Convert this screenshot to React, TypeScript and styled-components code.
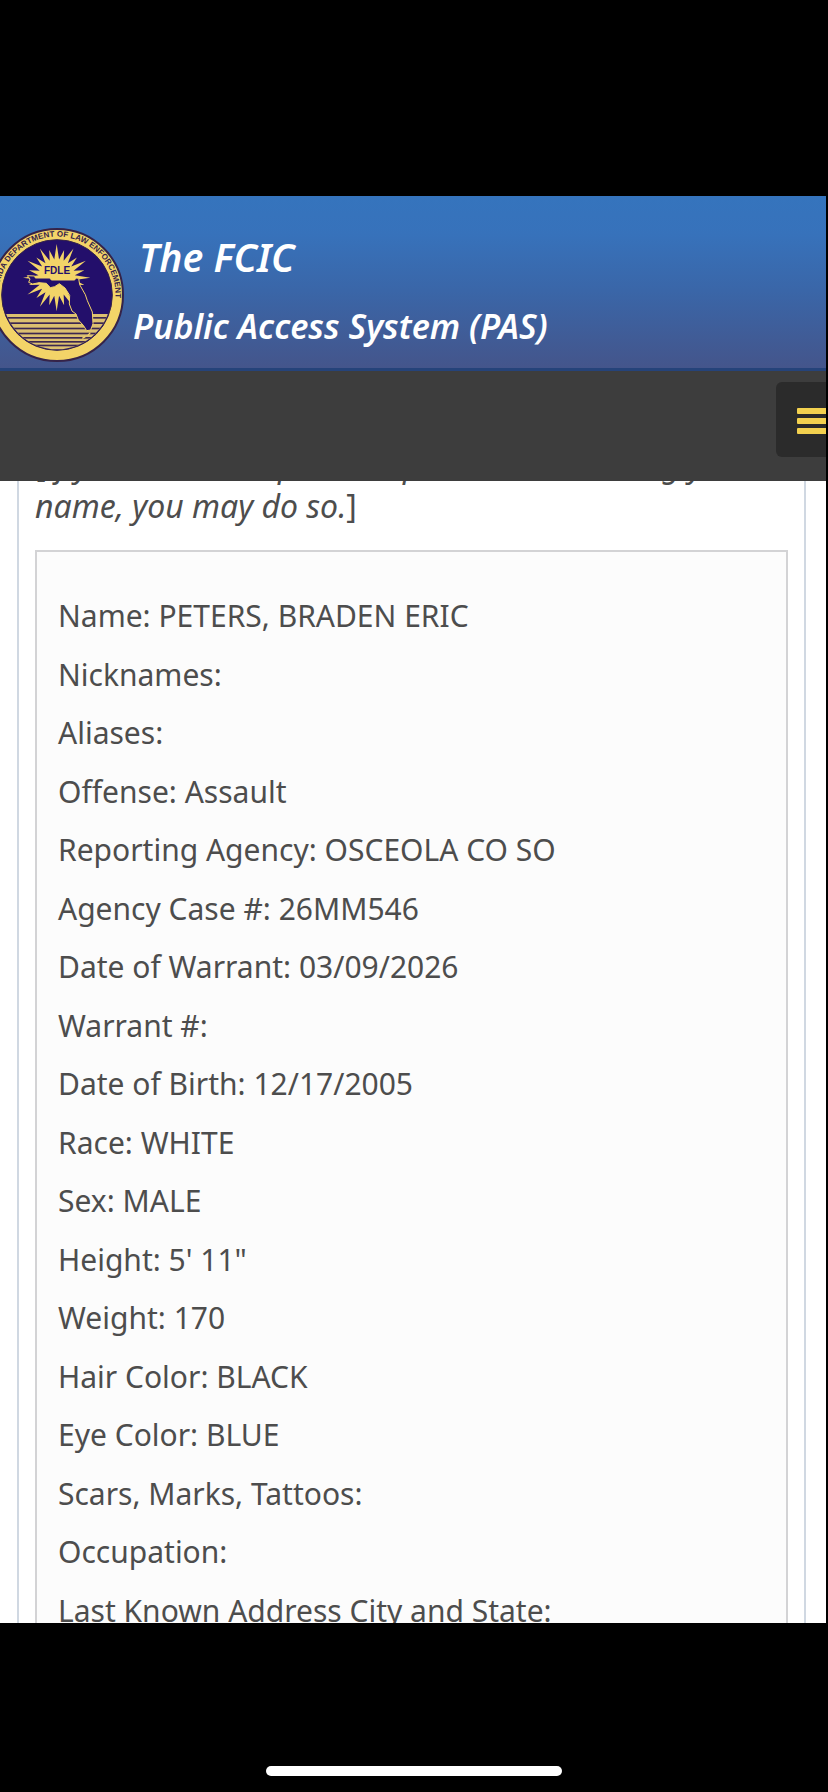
import React from "react";
import styled, { createGlobalStyle } from "styled-components";

const GlobalStyle = createGlobalStyle`
  *, *::before, *::after { box-sizing: border-box; }
  body {
    margin: 0;
    background: #000;
    color: #4d4d4d;
    font-family: "Noto Sans", "Open Sans", sans-serif;
  }
`;

const Screen = styled.div`
  display: flex;
  flex-direction: column;
  height: 100vh;
  padding-top: 196px;
  overflow: hidden;
`;

const Site = styled.div`
  flex: 1 1 0;
  min-height: 0;
  display: flex;
  flex-direction: column;
  margin-right: 2px;
  overflow: hidden;
  background: #fff;
`;

const Banner = styled.header`
  flex: none;
  display: flex;
  align-items: flex-end;
  gap: 9px;
  height: 175px;
  padding-bottom: 6px;
  background: linear-gradient(#3574bd 0%, #3772bb 22%, #3a66a8 55%, #44558b 100%);
  border-bottom: 3px solid #25437a;
`;

const Seal = styled.svg`
  flex: none;
  width: 134px;
  height: 134px;
  margin-left: -10px;
`;

const Titles = styled.div`
  padding-bottom: 1px;
  color: #fff;
  font-style: italic;
  font-weight: 600;
  line-height: 70px;
  white-space: nowrap;
`;

const SiteTitle = styled.h1`
  margin: 0;
  padding-left: 6px;
  font: inherit;
  font-size: 39px;
  line-height: 68px;
`;

const SiteSubtitle = styled.p`
  margin: 0;
  font-size: 34px;
`;

const MenuBar = styled.nav`
  flex: none;
  display: flex;
  justify-content: flex-end;
  height: 110px;
  padding-top: 11px;
  overflow: hidden;
  background: #3d3d3d;
`;

const MenuButton = styled.button`
  display: flex;
  flex-direction: column;
  justify-content: center;
  gap: 4px;
  width: 76px;
  height: 75px;
  margin-right: -26px;
  padding: 2px 18px 0 21px;
  border: 0;
  border-radius: 6px;
  background: #2b2b2b;
`;

const MenuLine = styled.span`
  height: 6px;
  border-radius: 1px;
  background: #f3d14f;
`;

const Viewport = styled.main`
  flex: 1 1 0;
  min-height: 0;
  overflow: hidden;
`;

const Panel = styled.section`
  margin: -37px 20px 0 17px;
  padding: 0 16px;
  border: solid #d0d8e2;
  border-width: 0 2px;
`;

const Notice = styled.p`
  margin: 0 0 24px;
  font-size: 32px;
  font-style: italic;
  line-height: 41px;
`;

const Upright = styled.span`
  font-style: normal;
`;

const Record = styled.dl`
  margin: 0;
  padding: 35px 21px;
  border: 2px solid #d3d3d5;
  background: #fcfcfc;
`;

const Field = styled.div`
  font-size: 30px;
  line-height: 58px;

  &:nth-child(even) {
    padding-top: 1px;
  }
`;

const Label = styled.dt`
  display: inline;
`;

const Value = styled.dd`
  display: inline;
  margin: 0;
`;

const HomeArea = styled.footer`
  flex: none;
  display: flex;
  justify-content: center;
  align-items: flex-end;
  height: 169px;
  padding-bottom: 16px;
`;

const HomeIndicator = styled.div`
  width: 296px;
  height: 10px;
  border-radius: 5px;
  background: #fff;
`;

const fields: [string, string][] = [
  ["Name", "PETERS, BRADEN ERIC"],
  ["Nicknames", ""],
  ["Aliases", ""],
  ["Offense", "Assault"],
  ["Reporting Agency", "OSCEOLA CO SO"],
  ["Agency Case #", "26MM546"],
  ["Date of Warrant", "03/09/2026"],
  ["Warrant #", ""],
  ["Date of Birth", "12/17/2005"],
  ["Race", "WHITE"],
  ["Sex", "MALE"],
  ["Height", "5' 11\""],
  ["Weight", "170"],
  ["Hair Color", "BLACK"],
  ["Eye Color", "BLUE"],
  ["Scars, Marks, Tattoos", ""],
  ["Occupation", ""],
  ["Last Known Address City and State", ""],
];

const GOLD = "#f3d468";
const NAVY = "#230f6b";

// Sun rays: alternating long tips and notches around the centre.
const rays = Array.from({ length: 48 }, (_, i) => {
  const angle = (i * Math.PI) / 24;
  const radius = i % 2 ? 55 : i % 4 ? 86 : 101;
  const x = 172 + radius * Math.sin(angle);
  const y = 187 - radius * Math.cos(angle);
  return `${x.toFixed(1)},${y.toFixed(1)}`;
}).join(" ");

const waves = [308, 324, 340, 355, 368, 380, 391];

function AgencySeal() {
  return (
    <Seal viewBox="-28 38 402 402" role="img" aria-label="Florida Department of Law Enforcement seal">
      <defs>
        <clipPath id="disk">
          <circle cx="173" cy="239" r="163" />
        </clipPath>
        <path id="ring" d="M1.3 275.5 A175.5 175.5 0 1 1 344.7 275.5" />
      </defs>
      <circle cx="173" cy="239" r="198" fill={GOLD} stroke="#352349" strokeWidth="6" />
      <circle cx="173" cy="239" r="166" fill={NAVY} stroke="#352349" strokeWidth="3" />
      <g clipPath="url(#disk)">
        <rect x="0" y="296" width="350" height="120" fill="#dcc070" />
        {waves.map((y) => (
          <rect key={y} x="0" y={y - 3} width="350" height="5" fill="#3c2751" />
        ))}
      </g>
      <polygon points={rays} fill={GOLD} />
      <path
        d="M84 181 L106 182 L108 188 L152 188 L156 194 L226 194 L229 188 L238 189 L241 208 L258 238 L264 256 L279 290 L281 325 L274 344 L262 346 L252 330 L237 314 L230 296 L218 287 L210 266 L211 240 L197 218 L180 205 L166 214 L153 217 L141 204 L119 202 L100 206 L88 201 L92 191 Z"
        fill={NAVY}
        stroke={GOLD}
        strokeWidth="3"
        strokeLinejoin="round"
      />
      <path d="M273 352 l-8 9 M258 364 l-9 5" stroke={GOLD} strokeWidth="4" />
      <text
        x="173"
        y="177"
        textAnchor="middle"
        fontFamily="Liberation Sans, sans-serif"
        fontWeight="700"
        fontSize="30"
        fill={NAVY}
      >
        FDLE
      </text>
      <text
        textAnchor="middle"
        fontFamily="Liberation Sans, sans-serif"
        fontWeight="700"
        fontSize="24"
        fill="#352349"
      >
        <textPath href="#ring" startOffset="50%">
          FLORIDA DEPARTMENT OF LAW ENFORCEMENT
        </textPath>
      </text>
    </Seal>
  );
}

export default function App() {
  return (
    <>
      <GlobalStyle />
      <Screen>
        <Site>
          <Banner>
            <AgencySeal />
            <Titles>
              <SiteTitle>The FCIC</SiteTitle>
              <SiteSubtitle>Public Access System (PAS)</SiteSubtitle>
            </Titles>
          </Banner>
          <MenuBar>
            <MenuButton type="button" aria-label="Menu">
              <MenuLine />
              <MenuLine />
              <MenuLine />
            </MenuButton>
          </MenuBar>
          <Viewport>
            <Panel>
              <Notice>
                <Upright>[</Upright>If you want to repeat the process when using your name, you may do so.
                <Upright>]</Upright>
              </Notice>
              <Record>
                {fields.map(([label, value]) => (
                  <Field key={label}>
                    <Label>{label}:</Label> <Value>{value}</Value>
                  </Field>
                ))}
              </Record>
            </Panel>
          </Viewport>
        </Site>
        <HomeArea>
          <HomeIndicator />
        </HomeArea>
      </Screen>
    </>
  );
}
